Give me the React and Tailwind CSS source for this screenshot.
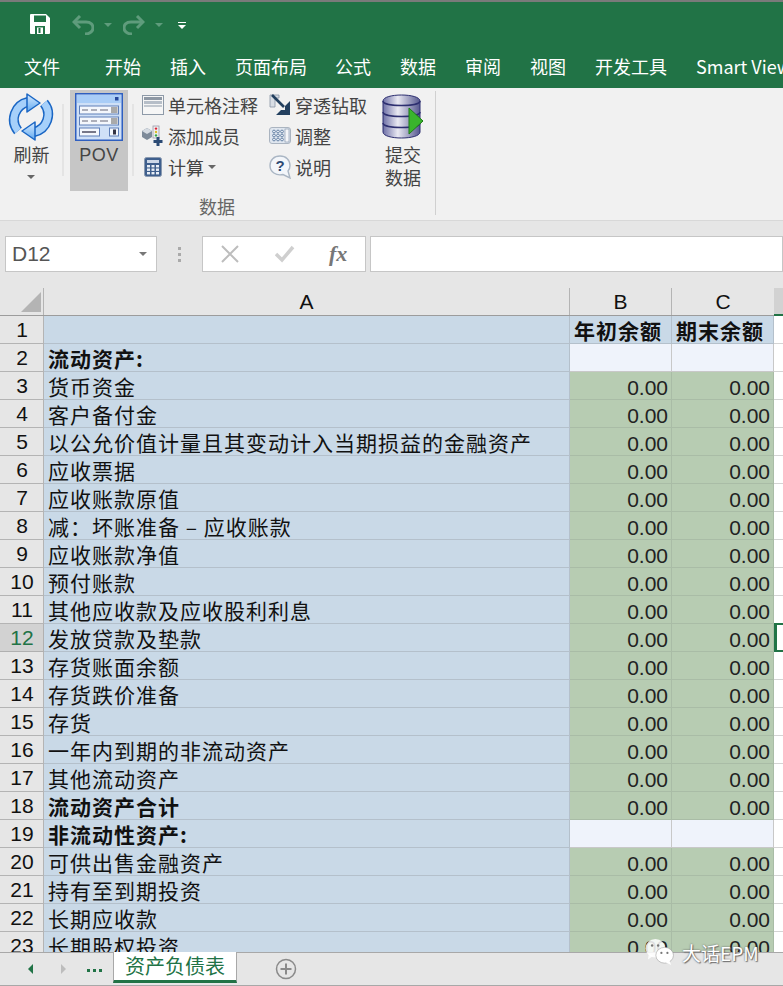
import React from "react";

const rows = [
  ["", "blue"], ["流动资产:", "head"], ["货币资金"], ["客户备付金"], ["以公允价值计量且其变动计入当期损益的金融资产"],
  ["应收票据"], ["应收账款原值"], ["减\uFF1A坏账准备 – 应收账款"], ["应收账款净值"], ["预付账款"],
  ["其他应收款及应收股利利息"], ["发放贷款及垫款"], ["存货账面余额"], ["存货跌价准备"], ["存货"],
  ["一年内到期的非流动资产"], ["其他流动资产"], ["流动资产合计", "total"], ["非流动性资产:", "head"],
  ["可供出售金融资产"], ["持有至到期投资"], ["长期应收款"], ["长期股权投资"],
];
const cjk = { fontFamily: '"Noto Sans CJK SC","Liberation Sans",sans-serif' };
const latin = { fontFamily: '"Liberation Sans",sans-serif' };

function RefreshIcon() {
  return (
    <svg width="48" height="48" viewBox="0 0 48 48" fill="none">
      <defs>
        <linearGradient id="rf" x1="0" y1="0" x2="0" y2="1"><stop offset="0" stopColor="#d8ebff" /><stop offset="1" stopColor="#62aaf0" /></linearGradient>
      </defs>
      <path d="M21 9 A 18 18 0 0 0 11 38" stroke="#1a66c4" strokeWidth="10" />
      <path d="M27 39 A 18 18 0 0 0 37 10" stroke="#1a66c4" strokeWidth="10" />
      <path d="M21 9 A 18 18 0 0 0 11 38" stroke="#a6d0fa" strokeWidth="7" />
      <path d="M27 39 A 18 18 0 0 0 37 10" stroke="#a6d0fa" strokeWidth="7" />
      <path d="M20 1 L33 10 L20 19 Z" fill="url(#rf)" stroke="#1a66c4" strokeWidth="1.500" strokeLinejoin="round" />
      <path d="M28 29 L15 38 L28 47 Z" fill="url(#rf)" stroke="#1a66c4" strokeWidth="1.500" strokeLinejoin="round" />
    </svg>
  );
}
function PovIcon() {
  return (
    <svg width="48" height="48" viewBox="0 0 48 48">
      <rect x="0.75" y="0.75" width="46.5" height="46.5" fill="#cfe0f7" stroke="#2f5fc0" strokeWidth="1.5" />
      <rect x="2" y="2" width="44" height="8" fill="#a9cdf7" />
      <rect x="40" y="4" width="3.5" height="3.5" fill="#24479b" />
      <rect x="4.5" y="13" width="39" height="8" fill="#f4f7fc" stroke="#5f7fb8" />
      <path d="M7 17h6M16 17h6M25 17h8" stroke="#667" strokeWidth="1" />
      <rect x="36" y="14" width="6.5" height="6" fill="#aaa" />
      <rect x="4.5" y="24" width="39" height="8" fill="#f4f7fc" stroke="#5f7fb8" />
      <path d="M7 28h6M16 28h6M25 28h8" stroke="#667" strokeWidth="1" />
      <rect x="36" y="25" width="6.5" height="6" fill="#aaa" />
      <rect x="4.5" y="35" width="20" height="8" fill="#f4f7fc" stroke="#5f7fb8" />
      <path d="M7 39h14" stroke="#778" strokeWidth="2" />
      <rect x="34.5" y="35" width="9" height="8" fill="#f4f7fc" stroke="#5f7fb8" />
      <rect x="38" y="36.5" width="3" height="5" fill="#334" />
    </svg>
  );
}
function CommentIcon() {
  return (
    <svg width="22" height="20" viewBox="0 0 22 20">
      <rect x="0.5" y="0.5" width="21" height="19" fill="#f6f6f6" stroke="#8e9aa8" />
      <rect x="2" y="2" width="18" height="3" fill="#8e98a4" />
      <rect x="2" y="6" width="18" height="3" fill="#b6bec8" />
      <path d="M2 11h18" stroke="#8e9aa8" />
    </svg>
  );
}
function AddMemberIcon() {
  return (
    <svg width="22" height="22" viewBox="0 0 22 22">
      <path d="M0 6 L5 3 L10 6 L10 12 L5 15 L0 12 Z" fill="#7d8a99" />
      <path d="M0 6 L5 3 L10 6 L5 9 Z" fill="#d5dbe2" />
      <rect x="11" y="1" width="6" height="12" fill="#eee" stroke="#99a" strokeWidth="0.8" />
      <circle cx="14" cy="3.6" r="1.2" fill="#d23" /><circle cx="14" cy="7" r="1.2" fill="#db2" /><circle cx="14" cy="10.4" r="1.2" fill="#3a4" />
      <path d="M16 12v9M11.5 16.5h9" stroke="#2b4a74" strokeWidth="3" />
    </svg>
  );
}
function CalcIcon() {
  return (
    <svg width="18" height="20" viewBox="0 0 18 20">
      <rect x="0.5" y="0.5" width="17" height="19" rx="2" fill="#3f5f8d" stroke="#8a9ab0" />
      <rect x="3" y="3" width="12" height="3" fill="#cdd8e8" />
      {[8, 11.5, 15].map((y) => [3, 7.5, 12].map((x) => <rect key={x + "-" + y} x={x} y={y} width="3" height="2.4" fill="#e8eef6" />))}
    </svg>
  );
}
function DrillIcon() {
  return (
    <svg width="22" height="22" viewBox="0 0 22 22">
      <path d="M1 1h9v3H6v9H1z" fill="#d8dde4" stroke="#8996a5" strokeWidth="0.8" />
      <path d="M3 1 L15 13" stroke="#23405f" strokeWidth="2.6" />
      <path d="M21 7 V21 H7 L12 16 H16 V12 Z" fill="#23405f" />
    </svg>
  );
}
function AdjustIcon() {
  return (
    <svg width="22" height="17" viewBox="0 0 22 17">
      <rect x="0.5" y="0.5" width="21" height="16" rx="2.5" fill="#dfe6ef" stroke="#aab4c0" />
      {[4.5, 8.5, 12.5].map((y) => [5, 9, 13].map((x) => <circle key={x + "-" + y} cx={x} cy={y} r="1.4" fill="#eef3f9" stroke="#4d6d96" strokeWidth="0.8" />))}
      <rect x="16" y="2" width="4" height="13" fill="#f4f6f9" stroke="#7d8ea4" strokeWidth="0.6" />
    </svg>
  );
}
function HelpIcon() {
  return (
    <svg width="22" height="24" viewBox="0 0 22 24">
      <path d="M11 1 C17 1 21 5 21 10.500 C21 13 20 15 19 16 L21 23 L14 19.500 C7 21 1 17 1 10.500 C1 5 5 1 11 1 Z" fill="#f3f6fa" stroke="#aab6c4" strokeWidth="1.4" />
      <text x="11" y="16" textAnchor="middle" fontSize="15" fontWeight="700" fill="#2f4a73" fontFamily="Liberation Sans">?</text>
    </svg>
  );
}
function DbIcon() {
  return (
    <svg width="42" height="46" viewBox="0 0 42 46">
      <defs>
        <linearGradient id="db" x1="0" y1="0" x2="1" y2="0"><stop offset="0" stopColor="#6d6fa6" /><stop offset="0.4" stopColor="#e9e9f2" /><stop offset="1" stopColor="#55578f" /></linearGradient>
      </defs>
      <path d="M1 7 C1 -1 38 -1 38 7 V38 C38 46 1 46 1 38 Z" fill="url(#db)" stroke="#2d2f70" />
      <path d="M1 7 C1 13 38 13 38 7 M1 18 C1 24 38 24 38 18 M1 29 C1 35 38 35 38 29" fill="none" stroke="#2d2f70" strokeWidth="1.5" />
      <path d="M27 14 L41 27 L27 40 Z" fill="#3ab52c" stroke="#1d7a18" />
    </svg>
  );
}
function Small({ icon, label, caret }) {
  return (
    <div className="flex items-center h-[31px]">
      <span className="w-[22px] h-[24px] flex items-center justify-center shrink-0">{icon}</span>
      <span className="ml-[4px] text-[18px] leading-[24px] text-[#444] whitespace-nowrap">{label}</span>
      {caret && <span className="ml-[4px] w-0 h-0 border-x-[4px] border-x-transparent border-t-[4px] border-t-[#666]" />}
    </div>
  );
}
function Caret({ cls }) {
  return <span className={"w-0 h-0 border-x-[4px] border-x-transparent border-t-[4px] " + cls} />;
}

export default function App() {
  return (
    <div className="w-[783px] h-[986px] overflow-hidden relative flex flex-col bg-white" style={cjk}>
      <div className="h-[88px] bg-[#217346] border-t-2 border-[#7a7a7a] shrink-0 flex flex-col text-white">
        <div className="h-[44px] flex items-center relative">
          <svg className="ml-[30px]" width="20" height="20" viewBox="0 0 20 20">
            <path d="M1 0h15l4 4v15a1 1 0 0 1-1 1H1a1 1 0 0 1-1-1V1a1 1 0 0 1 1-1z" fill="#fff" />
            <rect x="4" y="1.500" width="12" height="6.500" fill="#217346" />
            <rect x="5" y="12" width="10" height="8" fill="#217346" /><rect x="7" y="13.500" width="6" height="6.500" fill="#fff" /><rect x="8.500" y="14" width="2" height="5" fill="#217346" />
          </svg>
          <svg className="ml-[22px] mt-[2px]" width="22" height="20" viewBox="0 0 22 20" fill="none" stroke="#5f9c7c" strokeWidth="3">
            <path d="M8 1 L2 7 L8 13" /><path d="M2 7 H14 C19 7 21 10 21 13 C21 16 18 19 13 19" />
          </svg>
          <span className="ml-[10px] mt-[2px] flex"><Caret cls="border-t-[#5f9c7c]" /></span>
          <svg className="ml-[11px] mt-[2px]" width="22" height="20" viewBox="0 0 22 20" fill="none" stroke="#5f9c7c" strokeWidth="3">
            <path d="M14 1 L20 7 L14 13" /><path d="M20 7 H8 C3 7 1 10 1 13 C1 16 4 19 9 19" />
          </svg>
          <span className="ml-[10px] mt-[2px] flex"><Caret cls="border-t-[#5f9c7c]" /></span>
          <span className="ml-[15px] mt-[3px] flex flex-col items-center gap-[2px]">
            <span className="w-[8px] h-[1px] bg-white" />
            <Caret cls="border-t-white" />
          </span>
        </div>
        <div className="flex-1 flex items-start pt-[6px] text-[18px] leading-[28px] whitespace-nowrap overflow-hidden">
          <span className="ml-[24px]">文件</span>
          <span className="ml-[45px]">开始</span>
          <span className="ml-[29px]">插入</span>
          <span className="ml-[29px]">页面布局</span>
          <span className="ml-[28px]">公式</span>
          <span className="ml-[29px]">数据</span>
          <span className="ml-[29px]">审阅</span>
          <span className="ml-[29px]">视图</span>
          <span className="ml-[29px]">开发工具</span>
          <span className="ml-[29px]">Smart View</span>
        </div>
      </div>

      <div className="h-[133px] bg-[#f1f1f1] border-b border-[#d8d8d8] shrink-0 flex items-start">
        <div className="w-[62px] flex flex-col items-center pt-[5px] shrink-0">
          <RefreshIcon />
          <span className="text-[18px] leading-[24px] text-[#444] pl-[1px] mt-[1px]">刷新</span>
          <span className="mt-[9px]"><Caret cls="flex border-t-[#666]" /></span>
        </div>
        <div className="w-[2px] h-[72px] mt-[16px] bg-[#e4e4e4] shrink-0" />
        <div className="ml-[6px] mt-[2px] w-[58px] h-[101px] bg-[#c6c6c6] flex flex-col items-center pt-[3px] shrink-0">
          <PovIcon />
          <span className="text-[18px] leading-[24px] text-[#444] mt-[2px]" style={{ ...latin, letterSpacing: "0.5px" }}>POV</span>
        </div>
        <div className="w-[2px] h-[72px] mt-[16px] ml-[4px] bg-[#e4e4e4] shrink-0" />
        <div className="flex flex-col shrink-0 pt-[1px] w-[301px]">
          <div className="flex">
            <div className="ml-[8px] w-[127px] flex flex-col">
              <Small icon={<CommentIcon />} label="单元格注释" />
              <Small icon={<AddMemberIcon />} label="添加成员" />
              <Small icon={<CalcIcon />} label="计算" caret />
            </div>
            <div className="flex flex-col">
              <Small icon={<DrillIcon />} label="穿透钻取" />
              <Small icon={<AdjustIcon />} label="调整" />
              <Small icon={<HelpIcon />} label="说明" />
            </div>
            <div className="ml-[15px] pt-[5px] flex flex-col items-center">
              <DbIcon />
              <span className="text-[18px] leading-[23px] text-[#444] text-center mt-[3px] w-[40px]">提交 数据</span>
            </div>
          </div>
          <span className="ml-[65px] mt-[5px] text-[18px] leading-[24px] text-[#666]">数据</span>
        </div>
        <div className="w-px h-[124px] mt-[3px] bg-[#d0d0d0] shrink-0" />
      </div>

      <div className="h-[67px] bg-[#e6e6e6] shrink-0 flex items-start pt-[15px]">
        <div className="ml-[5px] w-[152px] h-[36px] bg-white border border-[#c6c6c6] flex items-center justify-between pl-[6px] pr-[9px]">
          <span className="text-[21px] text-[#555]" style={latin}>D12</span>
          <Caret cls="flex border-t-[#777]" />
        </div>
        <div className="w-[45px] h-[36px] flex flex-col items-center justify-center gap-[3px] shrink-0">
          <span className="w-[3px] h-[3px] bg-[#aaa]" /><span className="w-[3px] h-[3px] bg-[#aaa]" /><span className="w-[3px] h-[3px] bg-[#aaa]" />
        </div>
        <div className="w-[164px] h-[36px] bg-white border border-[#c6c6c6] flex items-center shrink-0">
          <svg className="ml-[18px]" width="18" height="18" viewBox="0 0 18 18" stroke="#bdbdbd" strokeWidth="2"><path d="M1 1 L17 17M17 1 L1 17" /></svg>
          <svg className="ml-[36px]" width="20" height="18" viewBox="0 0 20 18" fill="none" stroke="#cfcfcf" strokeWidth="3.5"><path d="M1 9 L7 15 L18 2" /></svg>
          <span className="ml-[34px] text-[22px] leading-none italic font-bold text-[#777]" style={{ fontFamily: '"Liberation Serif",serif' }}>fx</span>
        </div>
        <div className="ml-[4px] flex-1 h-[36px] bg-white border border-[#c6c6c6]" />
      </div>

      <div className="flex-1 min-h-0 overflow-hidden relative text-[21px] text-[#111]">
        <div className="flex h-[28px] bg-[#e6e6e6] border-b border-[#9c9c9c]">
          <div className="w-[44px] shrink-0 border-r border-[#b4b4b4] relative">
            <span className="absolute right-[2px] bottom-[3px] w-0 h-0 border-l-[20px] border-l-transparent border-b-[20px] border-b-[#b4b4b4]" />
          </div>
          <div className="w-[526px] shrink-0 border-r border-[#b4b4b4] flex items-center justify-center" style={latin}>A</div>
          <div className="w-[102px] shrink-0 border-r border-[#b4b4b4] flex items-center justify-center" style={latin}>B</div>
          <div className="w-[102px] shrink-0 flex items-center justify-center" style={latin}>C</div>
          <div className="flex-1 bg-[#d2d2d2] relative"><span className="absolute left-0 right-0 bottom-[-1px] h-[2px] bg-[#217346]" /></div>
        </div>
        {rows.map(([label, kind], i) => {
          const sel = i === 11;
          const first = i === 0;
          const head = kind === "head";
          const bold = head || kind === "total";
          const rightCls = first
            ? "bg-[#c9d9e7] border-[#b4c0cb]"
            : head
            ? "bg-[#eff3fb] border-[#c8c8c8]"
            : "bg-[#b7ccb2] border-[#a9bca6]";
          return (
            <div key={i} className="flex h-[28px] bg-white">
              <div className={"w-[44px] shrink-0 border-r border-b flex items-center justify-center pl-[1px] pt-[1px] " + (sel ? "bg-[#d2d2d2] text-[#217346] border-[#b0b0b0]" : "bg-[#e6e6e6] border-[#b4b4b4]")} style={latin}>{i + 1}</div>
              <div className={"w-[526px] shrink-0 bg-[#c9d9e7] border-r border-b border-[#b4c0cb] pl-[4px] leading-[29px] tracking-[1px] whitespace-pre " + (bold ? "font-bold" : "")}>{label}</div>
              {[0, 1].map((c) => (
                <div key={c} className={"w-[102px] shrink-0 border-r border-b pr-[3px] text-right leading-[29px] whitespace-nowrap " + rightCls} style={first ? undefined : { ...latin, color: "#222" }}>
                  {first ? <span className="font-bold block text-left pl-[4px] tracking-[1px]">{c === 0 ? "年初余额" : "期末余额"}</span> : head ? "" : <span className="block translate-y-[1px]">0.00</span>}
                </div>
              ))}
              <div className={sel ? "flex-1 -mt-px border-y-2 border-l-[3px] border-[#217346]" : "flex-1 border-b border-[#d4d4d4]"} />
            </div>
          );
        })}
      </div>

      <div className="absolute left-0 top-[952px] w-[783px] h-[34px] bg-[#e6e6e6] border-t border-b border-[#a8a8a8] flex items-start">
        <span className="ml-[28px] mt-[11px] w-0 h-0 border-y-[5px] border-y-transparent border-r-[5px] border-r-[#217346]" />
        <span className="ml-[28px] mt-[11px] w-0 h-0 border-y-[5px] border-y-transparent border-l-[5px] border-l-[#bdbdbd]" />
        <span className="ml-[21px] mt-[16px] flex gap-[3px]">
          <span className="w-[3px] h-[3px] bg-[#217346]" /><span className="w-[3px] h-[3px] bg-[#217346]" /><span className="w-[3px] h-[3px] bg-[#217346]" />
        </span>
        <div className="ml-[11px] -mt-px w-[124px] h-[31px] bg-white border-x border-[#a8a8a8] border-b-[3px] border-b-[#217346] text-[20px] leading-[28px] text-[#217346] text-center">资产负债表</div>
        <svg className="ml-[38px] mt-[5px]" width="22" height="22" viewBox="0 0 22 22" fill="none" stroke="#8a8a8a">
          <circle cx="11" cy="11" r="9.500" strokeWidth="1.5" /><path d="M11 5.500v11M5.500 11h11" strokeWidth="2" />
        </svg>
      </div>

      <div className="absolute left-[645px] top-[937px] flex items-center">
        <svg width="30" height="26" viewBox="0 0 32 28">
          <ellipse cx="11" cy="10" rx="10.500" ry="10" fill="#fff" opacity="0.85" />
          <path d="M4 16 L3 22 L9 18 Z" fill="#fff" opacity="0.85" />
          <ellipse cx="21" cy="17.500" rx="9.500" ry="8.500" fill="#fff" stroke="#8a8a8a" strokeWidth="0.5" />
          <path d="M26 23 L28 28 L22 25 Z" fill="#fff" />
          <circle cx="7.500" cy="7" r="1.300" fill="#777" /><circle cx="14" cy="7" r="1.300" fill="#777" />
          <circle cx="17.500" cy="15" r="1.200" fill="#777" /><circle cx="24" cy="15" r="1.200" fill="#777" />
        </svg>
        <span className="ml-[7px] mt-[2px] text-[19px] leading-[28px] text-white whitespace-nowrap" style={{ textShadow: "0 0 2px #555,1px 1px 1px #777" }}>大话EPM</span>
      </div>
    </div>
  );
}
